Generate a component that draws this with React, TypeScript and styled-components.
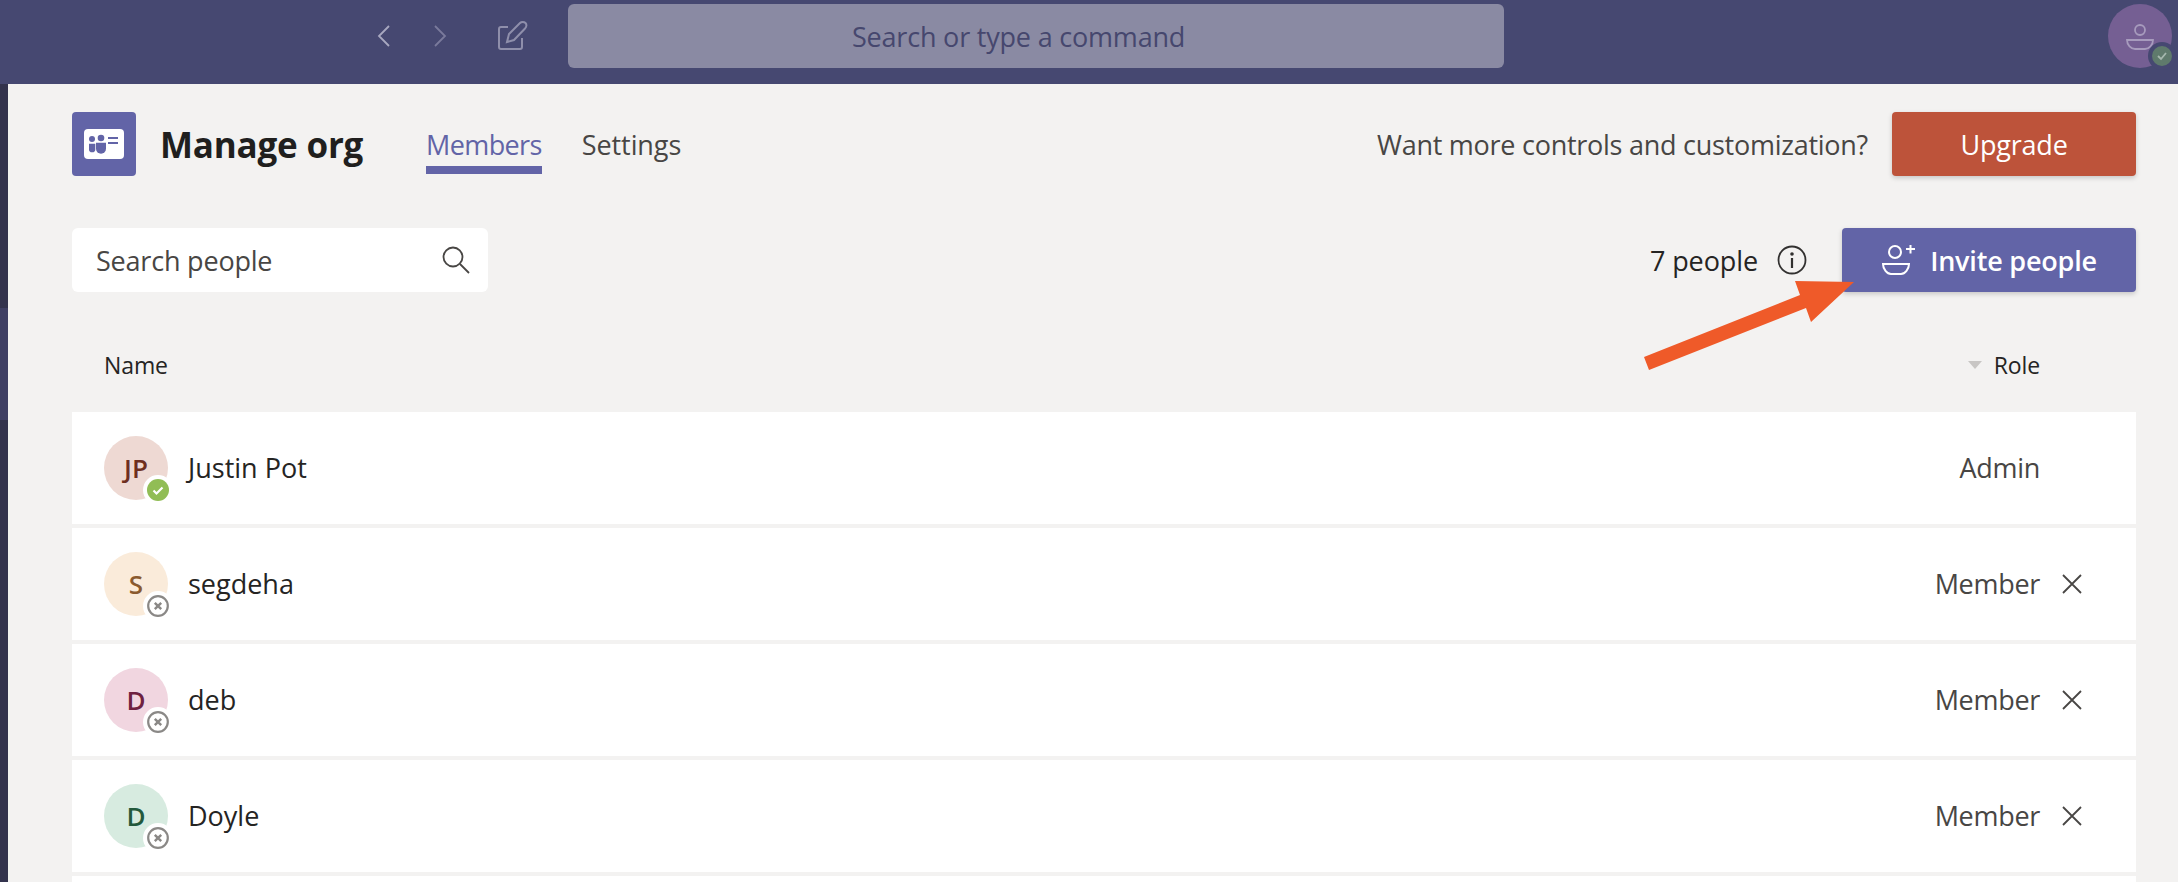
import styled, { createGlobalStyle } from "styled-components";

const GlobalStyle = createGlobalStyle`
  html, body {
    margin: 0;
    padding: 0;
    height: 100%;
    overflow: hidden;
    background: #f3f2f1;
    font-family: "Open Sans", "Noto Sans", sans-serif;
  }
`;

const Page = styled.div`
  position: relative;
  width: 2178px;
  height: 882px;
  overflow: hidden;
  display: flex;
  flex-direction: column;
`;

const TopBar = styled.header`
  flex: none;
  height: 84px;
  background: #464871;
  display: flex;
  align-items: flex-start;
  padding: 4px 6px 0 377px;
  box-sizing: border-box;
`;

const NavIcons = styled.div`
  display: flex;
  align-items: center;
  height: 64px;
  width: 191px;
  flex: none;
`;

const NavIcon = styled.svg<{ $gap?: number }>`
  display: block;
  flex: none;
  margin-right: ${(p) => p.$gap ?? 0}px;
`;

const CommandBox = styled.div`
  width: 936px;
  height: 64px;
  box-sizing: border-box;
  padding-left: 284px;
  border-radius: 6px;
  background: #8a8aa3;
  color: #46476e;
  font-size: 27px;
  letter-spacing: -0.2px;
  display: flex;
  align-items: center;
`;

const UserAvatar = styled.div`
  position: relative;
  margin-left: auto;
  width: 64px;
  height: 64px;
  border-radius: 50%;
  background: #755f93;
  display: flex;
  align-items: center;
  justify-content: center;
`;

const UserStatus = styled.div`
  position: absolute;
  right: -4px;
  bottom: -2px;
  width: 20px;
  height: 20px;
  border-radius: 50%;
  background: #5f7a6c;
  border: 4px solid #464871;
  display: flex;
  align-items: center;
  justify-content: center;
`;

const Body = styled.div`
  flex: 1;
  display: flex;
  min-height: 0;
`;

const Strip = styled.div`
  flex: none;
  width: 8px;
  background: linear-gradient(
    #33334d 0,
    #33334d 224px,
    #3f3f63 224px,
    #3f3f63 336px,
    #33334d 336px
  );
`;

const Main = styled.main`
  flex: 1;
  padding: 28px 42px 0 64px;
  background: #f3f2f1;
  min-width: 0;
`;

const HeaderRow = styled.div`
  display: flex;
  align-items: center;
  height: 64px;
`;

const AppTile = styled.div`
  flex: none;
  width: 64px;
  height: 64px;
  border-radius: 4px;
  background: #6264a7;
  display: flex;
  align-items: center;
  justify-content: center;
`;

const Title = styled.h1`
  margin: 0 0 0 24px;
  font-size: 35px;
  font-weight: 700;
  color: #201f1e;
  letter-spacing: -0.2px;
  width: 266px;
  flex: none;
`;

const Tab = styled.div<{ $active?: boolean }>`
  position: relative;
  height: 64px;
  margin-right: 40px;
  display: flex;
  align-items: center;
  font-size: 27px;
  letter-spacing: ${(p) => (p.$active ? "-0.6px" : "-0.1px")};
  color: ${(p) => (p.$active ? "#6264a7" : "#484644")};
  &::after {
    content: "";
    display: ${(p) => (p.$active ? "block" : "none")};
    position: absolute;
    left: 0;
    right: 0;
    bottom: 2px;
    height: 8px;
    background: #6264a7;
  }
`;

const Promo = styled.div`
  margin-left: auto;
  margin-right: 24px;
  font-size: 27px;
  letter-spacing: -0.26px;
  color: #484644;
`;

const Button = styled.button<{ $bg: string; $w: number }>`
  width: ${(p) => p.$w}px;
  height: 64px;
  border: 0;
  border-radius: 4px;
  background: ${(p) => p.$bg};
  color: #fff;
  font-family: inherit;
  font-size: 27px;
  letter-spacing: -0.2px;
  display: flex;
  align-items: center;
  justify-content: center;
  padding: 0;
  box-shadow: 0 2px 5px rgba(0, 0, 0, 0.18);
`;

const InviteLabel = styled.span`
  font-weight: 600;
  margin-left: 15px;
`;

const Toolbar = styled.div`
  margin-top: 52px;
  display: flex;
  align-items: center;
  height: 64px;
`;

const SearchBox = styled.div`
  width: 416px;
  height: 64px;
  box-sizing: border-box;
  padding: 0 17px 0 24px;
  border-radius: 6px;
  background: #fff;
  display: flex;
  align-items: center;
  justify-content: space-between;
  font-size: 27px;
  letter-spacing: -0.2px;
  color: #484644;
`;

const PeopleCount = styled.div`
  margin-left: auto;
  display: flex;
  align-items: center;
  font-size: 27px;
  letter-spacing: -0.1px;
  color: #252423;
  margin-right: 35px;
  gap: 19px;
`;

const TableHead = styled.div`
  height: 120px;
  box-sizing: border-box;
  padding: 26px 96px 0 32px;
  display: flex;
  align-items: center;
  justify-content: space-between;
  font-size: 23px;
  letter-spacing: -0.1px;
  color: #252423;
`;

const RoleHead = styled.div`
  display: flex;
  align-items: center;
  gap: 12px;
`;

const SortCaret = styled.span`
  width: 0;
  height: 0;
  border-left: 7px solid transparent;
  border-right: 7px solid transparent;
  border-top: 8px solid #c8c6c4;
`;

const Rows = styled.div`
  display: flex;
  flex-direction: column;
  gap: 4px;
`;

const Row = styled.div`
  flex: none;
  height: 112px;
  box-sizing: border-box;
  background: #fff;
  padding: 0 0 0 32px;
  display: flex;
  align-items: center;
`;

const Avatar = styled.div<{ $bg: string; $fg: string }>`
  position: relative;
  flex: none;
  width: 64px;
  height: 64px;
  border-radius: 50%;
  background: ${(p) => p.$bg};
  color: ${(p) => p.$fg};
  font-size: 26px;
  font-weight: 600;
  display: flex;
  align-items: center;
  justify-content: center;
`;

const Presence = styled.div`
  position: absolute;
  right: -5px;
  bottom: -5px;
  width: 22px;
  height: 22px;
  border-radius: 50%;
  border: 4px solid #fff;
  background: #fff;

  svg {
    display: block;
  }
`;

const Name = styled.div`
  margin-left: 20px;
  padding-bottom: 2px;
  font-size: 27px;
  color: #252423;
`;

const RoleCell = styled.div`
  margin-left: auto;
  width: 200px;
  margin-right: 96px;
  padding-bottom: 2px;
  text-align: right;
  font-size: 27px;
  letter-spacing: -0.3px;
  color: #484644;
  position: relative;
`;

const RemoveIcon = styled.svg`
  position: absolute;
  right: -42px;
  top: 50%;
  margin-top: -10px;
`;

const Arrow = styled.svg`
  position: absolute;
  left: 0;
  top: 0;
  pointer-events: none;
`;

const Online = () => (
  <svg width="22" height="22" viewBox="0 0 22 22">
    <circle cx="11" cy="11" r="11" fill="#91bd55" />
    <path d="M6.5 11.5l3 3 6-6" fill="none" stroke="#fff" strokeWidth="2.2" />
  </svg>
);

const Offline = () => (
  <svg width="22" height="22" viewBox="0 0 22 22">
    <circle cx="11" cy="11" r="9.8" fill="#fff" stroke="#8a8886" strokeWidth="2.2" />
    <path d="M7.8 7.8l6.4 6.4M14.2 7.8l-6.4 6.4" stroke="#8a8886" strokeWidth="2.4" />
  </svg>
);

const people = [
  { initials: "JP", name: "Justin Pot", role: "Admin", bg: "#eed9d3", fg: "#6e2f1f", online: true },
  { initials: "S", name: "segdeha", role: "Member", bg: "#faebda", fg: "#8a5a2e" },
  { initials: "D", name: "deb", role: "Member", bg: "#f1d6e0", fg: "#6e2140" },
  { initials: "D", name: "Doyle", role: "Member", bg: "#d7ebe0", fg: "#23593c" },
  { initials: "", name: "", role: "", bg: "#fff", fg: "#fff", blank: true },
];

export default function App() {
  return (
    <Page>
      <GlobalStyle />
      <TopBar>
        <NavIcons>
          <NavIcon width="13" height="24" viewBox="0 0 13 24" $gap={44}>
            <path d="M12 2L2 12l10 10" fill="none" stroke="#a8a8c0" strokeWidth="1.8" />
          </NavIcon>
          <NavIcon width="13" height="24" viewBox="0 0 13 24" $gap={51}>
            <path d="M1 2l10 10L1 22" fill="none" stroke="#7a7a9c" strokeWidth="1.8" />
          </NavIcon>
          <NavIcon width="30" height="32" viewBox="0 0 30 32">
            <path
              d="M10 7H3a2 2 0 0 0-2 2v18a2 2 0 0 0 2 2h19a2 2 0 0 0 2-2V18"
              fill="none"
              stroke="#8f8fab"
              strokeWidth="2"
            />
            <path
              d="M9 22l2-8L22 3c1.500-1.500 4-1.500 5.500 0s1 4-.5 5.500L16 20z"
              fill="none"
              stroke="#8f8fab"
              strokeWidth="2"
            />
          </NavIcon>
        </NavIcons>
        <CommandBox>Search or type a command</CommandBox>
        <UserAvatar>
          <svg width="30" height="30" viewBox="0 0 30 30">
            <circle cx="15" cy="9" r="5" fill="none" stroke="#a79bbd" strokeWidth="1.8" />
            <path
              d="M2 19h26c0 5-4 9-8 9h-10c-4 0-8-4-8-9z"
              fill="none"
              stroke="#a79bbd"
              strokeWidth="1.8"
            />
          </svg>
          <UserStatus>
            <svg width="12" height="12" viewBox="0 0 12 12">
              <path d="M2 6l3 3 5-6" fill="none" stroke="#a6b8ae" strokeWidth="1.8" />
            </svg>
          </UserStatus>
        </UserAvatar>
      </TopBar>
      <Body>
        <Strip />
        <Main>
          <HeaderRow>
            <AppTile>
              <svg width="40" height="30" viewBox="0 0 40 30">
                <rect width="40" height="30" rx="4" fill="#fff" />
                <circle cx="8" cy="10" r="3" fill="#6264a7" />
                <circle cx="17" cy="9" r="3.300" fill="#6264a7" />
                <path d="M5 14.700h6.300v5.500a3.150 3.150 0 0 1-6.300 0z" fill="#6264a7" />
                <path d="M12 13.700h10v6a5 5 0 0 1-10 0z" fill="#6264a7" />
                <rect x="24" y="8" width="10" height="2" fill="#6264a7" />
                <rect x="24" y="13" width="10" height="2" fill="#6264a7" />
              </svg>
            </AppTile>
            <Title>Manage org</Title>
            <Tab $active>Members</Tab>
            <Tab>Settings</Tab>
            <Promo>Want more controls and customization?</Promo>
            <Button $bg="#bd533a" $w={244}>Upgrade</Button>
          </HeaderRow>
          <Toolbar>
            <SearchBox>
              Search people
              <svg width="30" height="30" viewBox="0 0 30 30">
                <circle cx="12" cy="12" r="9.500" fill="none" stroke="#484644" strokeWidth="1.8" />
                <path d="M19 19l9 9" stroke="#484644" strokeWidth="1.8" />
              </svg>
            </SearchBox>
            <PeopleCount>
              7 people
              <svg width="30" height="30" viewBox="0 0 30 30">
                <circle cx="15" cy="15" r="13.500" fill="none" stroke="#323130" strokeWidth="1.8" />
                <circle cx="15" cy="9" r="1.800" fill="#323130" />
                <rect x="13.900" y="13" width="2.200" height="10" fill="#323130" />
              </svg>
            </PeopleCount>
            <Button $bg="#6264a7" $w={294}>
              <svg width="34" height="30" viewBox="0 0 34 30">
                <circle cx="14" cy="7" r="6" fill="none" stroke="#fff" strokeWidth="2" />
                <path d="M25 4h9M29.500 0v8.500" stroke="#fff" strokeWidth="2" />
                <path
                  d="M2 19h26c0 5-4 10-8 10h-10c-4 0-8-5-8-10z"
                  fill="none"
                  stroke="#fff"
                  strokeWidth="2"
                />
              </svg>
              <InviteLabel>Invite people</InviteLabel>
            </Button>
          </Toolbar>
          <TableHead>
            <span>Name</span>
            <RoleHead>
              <SortCaret />
              Role
            </RoleHead>
          </TableHead>
          <Rows>
            {people.map((p, i) => (
              <Row key={i}>
                {!p.blank && (
                  <>
                    <Avatar $bg={p.bg} $fg={p.fg}>
                      {p.initials}
                      <Presence>{p.online ? <Online /> : <Offline />}</Presence>
                    </Avatar>
                    <Name>{p.name}</Name>
                    <RoleCell>
                      {p.role}
                      {p.role === "Member" && (
                        <RemoveIcon width="20" height="20" viewBox="0 0 20 20">
                          <path d="M1 1l18 18M19 1L1 19" stroke="#484644" strokeWidth="1.800" />
                        </RemoveIcon>
                      )}
                    </RoleCell>
                  </>
                )}
              </Row>
            ))}
          </Rows>
        </Main>
      </Body>
      <Arrow width="2178" height="882" viewBox="0 0 2178 882">
        <polygon
          points="1644,357 1649,370 1806,308 1811,322 1854,282 1795,281 1800,295"
          fill="#ef5a29"
        />
      </Arrow>
    </Page>
  );
}
